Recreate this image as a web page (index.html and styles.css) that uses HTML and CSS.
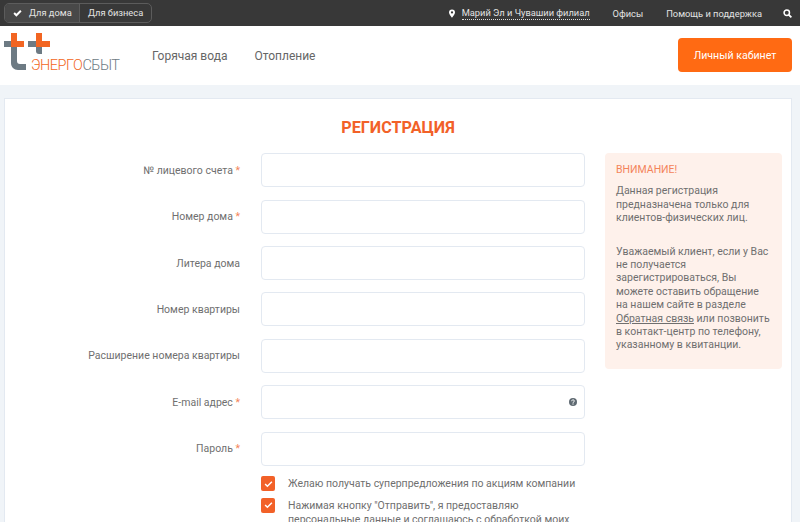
FILE: index.html
```html
<!DOCTYPE html>
<html lang="ru">
<head>
<meta charset="utf-8">
<title>Регистрация</title>
<link rel="stylesheet" href="styles.css">
</head>
<body>
<div class="topbar">
  <div class="switch">
    <a class="switch-item active"><svg class="check" viewBox="0 0 12 10"><path d="M1.500 5l3 3 6-6" fill="none" stroke="#fff" stroke-width="2.600"/></svg>Для дома</a>
    <a class="switch-item">Для бизнеса</a>
  </div>
  <div class="topnav">
    <svg class="pin" viewBox="0 0 8 11"><path fill-rule="evenodd" d="M4 0a4 4 0 0 1 4 4c0 2.500-4 7-4 7S0 6.500 0 4a4 4 0 0 1 4-4zm0 2.500a1.500 1.500 0 1 0 0 3 1.500 1.500 0 0 0 0-3z" fill="#fff"/></svg>
    <a class="region">Марий Эл и Чувашии филиал</a>
    <a class="toplink offices">Офисы</a>
    <a class="toplink help">Помощь и поддержка</a>
    <svg class="search" viewBox="0 0 10 10"><circle cx="4.200" cy="4.200" r="3" fill="none" stroke="#fff" stroke-width="1.700"/><path d="M6.500 6.500L9.300 9.300" stroke="#fff" stroke-width="2"/></svg>
  </div>
</div>
<header class="header">
  <div class="logo">
    <svg class="logo-mark" viewBox="0 0 46 37">
      <rect x="0" y="8" width="7" height="6" fill="#6d7a83"/>
      <rect x="7" y="0" width="6" height="14" fill="#f26522"/>
      <rect x="13" y="8" width="7" height="6" fill="#f26522"/>
      <path d="M7 14h6v14c0 2 1 3 3 3h6v6h-8c-4 0-7-3-7-7z" fill="#6d7a83"/>
      <rect x="24" y="8" width="8" height="6" fill="#6d7a83"/>
      <rect x="32" y="0" width="6" height="14" fill="#f26522"/>
      <rect x="38" y="8" width="8" height="6" fill="#f26522"/>
      <path d="M32 14h6v7h-3c-2 0-3-1-3-3z" fill="#6d7a83"/>
    </svg>
    <div class="logo-text"><span class="logo-a">ЭНЕРГО</span><span class="logo-b">СБЫТ</span></div>
  </div>
  <nav class="mainnav">
    <a>Горячая вода</a>
    <a>Отопление</a>
  </nav>
  <a class="cabinet">Личный кабинет</a>
</header>
<main class="card">
  <h1 class="title">РЕГИСТРАЦИЯ</h1>
  <div class="columns">
    <form class="form">
      <div class="row"><label class="label">№ лицевого счета <i>*</i></label><input class="input" type="text"></div>
      <div class="row"><label class="label">Номер дома <i>*</i></label><input class="input" type="text"></div>
      <div class="row"><label class="label">Литера дома</label><input class="input" type="text"></div>
      <div class="row"><label class="label">Номер квартиры</label><input class="input" type="text"></div>
      <div class="row"><label class="label">Расширение номера квартиры</label><input class="input" type="text"></div>
      <div class="row"><label class="label">E-mail адрес <i>*</i></label>
        <div class="input-wrap"><input class="input" type="text"><svg class="hint" viewBox="0 0 10 10"><circle cx="5" cy="5" r="5" fill="#5f6a72"/><path d="M3.300 4c0-2.200 3.400-2.200 3.400-.2 0 1.200-1.700 1.100-1.700 2.300" fill="none" stroke="#fff" stroke-width="1.200"/><rect x="4.300" y="6.800" width="1.400" height="1.400" fill="#fff"/></svg></div>
      </div>
      <div class="row"><label class="label">Пароль <i>*</i></label><input class="input" type="text"></div>
      <div class="check-row first"><span class="box"><svg viewBox="0 0 12 10"><path d="M1.500 5l3 3 6-6" fill="none" stroke="#fff" stroke-width="2"/></svg></span><span class="check-text">Желаю получать суперпредложения по акциям компании</span></div>
      <div class="check-row"><span class="box"><svg viewBox="0 0 12 10"><path d="M1.500 5l3 3 6-6" fill="none" stroke="#fff" stroke-width="2"/></svg></span><span class="check-text">Нажимая кнопку "Отправить", я предоставляю персональные данные и соглашаюсь с обработкой моих персональных данных</span></div>
    </form>
    <aside class="notice">
      <div class="notice-title">ВНИМАНИЕ!</div>
      <p class="notice-p">Данная регистрация предназначена только для клиентов-физических лиц.</p>
      <p class="notice-p">Уважаемый клиент, если у Вас не получается зарегистрироваться, Вы можете оставить обращение на нашем сайте в разделе <a class="notice-link">Обратная связь</a> или позвонить в контакт-центр по телефону, указанному в квитанции.</p>
    </aside>
  </div>
</main>
</body>
</html>
```
FILE: styles.css
```css
* { box-sizing: border-box; }
html, body { margin: 0; height: 522px; overflow: hidden; }
body { background: #f0f4f8; font-family: Roboto, "Liberation Sans", sans-serif; font-size: 10.500px; color: #6f6f6f; }

.topbar { height: 26px; background: #383838; display: flex; align-items: center; justify-content: space-between; padding: 0 0 0 4px; color: #e3e3e3; font-size: 9.300px; white-space: nowrap; }
.switch { display: flex; height: 20px; width: 148px; border: 1px solid #5c5c5c; border-radius: 5px; overflow: hidden; margin-top: -1px; }
.switch-item { display: flex; align-items: center; padding: 0 8px; }
.switch-item.active { background: #484848; border-right: 1px solid #5c5c5c; width: 75px; flex: none; }
.check { width: 9px; height: 8px; margin-right: 7px; flex: none; }
.topnav { display: flex; align-items: center; padding-right: 8px; }
.pin { width: 6px; height: 9px; margin-right: 7px; }
.region { border-bottom: 1px dotted #ddd; line-height: 12px; margin-right: 23px; }
.toplink { margin-right: 23px; }
.help { margin-right: 21px; }
.search { width: 9px; height: 9px; }

.header { height: 59px; background: #fff; display: flex; align-items: center; padding: 0 8px 0 4px; }
.logo { width: 148px; height: 46px; position: relative; flex: none; align-self: flex-start; margin-top: 7px; }
.logo-mark { position: absolute; left: 0; top: 0; width: 46px; height: 37px; }
.logo-text { position: absolute; left: 27px; top: 23px; font-size: 14.500px; font-weight: 300; line-height: 20px; letter-spacing: -0.500px; white-space: nowrap; }
.logo-a { color: #f26522; }
.logo-b { color: #6d7a83; }
.mainnav { display: flex; gap: 27px; font-size: 12px; color: #666; flex: 1; }
.cabinet { width: 114px; height: 34px; background: #ff6a13; color: #fff; border-radius: 4px; font-size: 10.600px; display: flex; align-items: center; justify-content: center; margin-top: -1px; }

.card { margin: 13px 8px 0 4px; height: 440px; background: #fff; border: 1px solid #e3e9f1; border-bottom: 0; }
.title { margin: 19px 0 0; font-size: 16.200px; line-height: 20px; font-weight: 700; color: #f26128; text-align: center; }
.columns { display: flex; margin-top: 15.300px; }
.form { width: 580px; flex: none; }
.row { display: flex; align-items: center; height: 34px; margin-bottom: 12.400px; }
.label { width: 235px; text-align: right; margin-right: 21px; flex: none; }
.label i { font-style: normal; color: #f4845a; }
.input { width: 324px; height: 34px; border: 1px solid #e3e9f1; border-radius: 4px; background: #fff; display: block; padding: 0; }
.input-wrap { position: relative; width: 324px; height: 34px; }
.hint { position: absolute; right: 8px; top: 13px; width: 8px; height: 8px; }

.check-row { display: flex; margin-left: 256px; width: 324px; align-items: flex-start; margin-bottom: 6px; }
.check-row.first { margin-top: -2px; }
.box { width: 14px; height: 15px; background: #f26128; border-radius: 2px; flex: none; display: flex; align-items: center; justify-content: center; margin-right: 13px; }
.box svg { width: 9px; height: 8px; }
.check-text { line-height: 14.500px; padding-top: 1px; }

.notice { margin-left: 20px; width: 177px; height: 216px; background: #fef1eb; border-radius: 4px; padding: 10px 11px; line-height: 13.400px; }
.notice-title { color: #f4845a; line-height: 14px; margin-bottom: 7px; }
.notice-p { margin: 0 0 20px; }
.notice-link { text-decoration: underline; }
```
